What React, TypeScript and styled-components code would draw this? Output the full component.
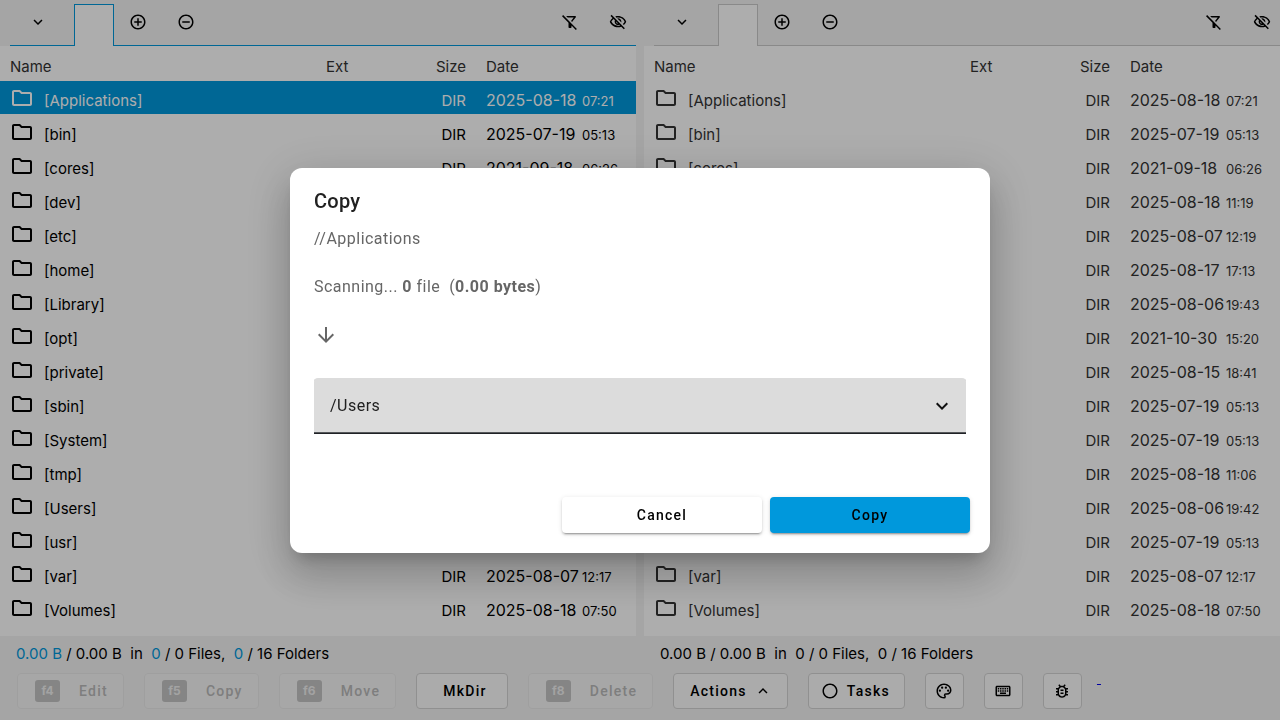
import React from "react";
import styled, { createGlobalStyle, css } from "styled-components";
import {
  MdAddCircleOutline,
  MdArrowDownward,
  MdExpandLess,
  MdExpandMore,
  MdOutlineBugReport,
  MdOutlineFilterAltOff,
  MdOutlineFolder,
  MdOutlineKeyboard,
  MdOutlinePalette,
  MdOutlineVisibilityOff,
  MdRadioButtonUnchecked,
  MdRemoveCircleOutline,
} from "react-icons/md";

const accent = "#0098dc";

const GlobalStyle = createGlobalStyle`
  * { box-sizing: border-box; }
  body {
    margin: 0;
    background: #f4f4f4;
    color: #000;
    font-family: Inter, "Liberation Sans", sans-serif;
    font-size: 15px;
  }
  button, select { font: inherit; color: inherit; }
`;

const Page = styled.div`
  display: flex;
  flex-direction: column;
  min-height: 100vh;
`;

const Panels = styled.main`
  display: flex;
  flex: 1;
  gap: 8px;
`;

const Panel = styled.section`
  display: flex;
  flex-direction: column;
  flex: 1;
  min-width: 0;
`;

const TabBar = styled.header<{ $active: boolean }>`
  --line: ${(p) => (p.$active ? accent : "#cbcbcb")};
  display: flex;
  height: 46px;
  padding: 4px 0 0 10px;
`;

const BarSegment = styled.div<{ $grow?: boolean }>`
  display: flex;
  align-items: center;
  padding-bottom: 5px;
  border-bottom: 1px solid var(--line);
  ${(p) => p.$grow && "flex: 1;"}
`;

const Tab = styled.button`
  width: 40px;
  padding: 0;
  background: #fff;
  border: 1px solid var(--line);
  border-bottom: 0;
`;

const IconButton = styled.button`
  display: flex;
  align-items: center;
  justify-content: center;
  width: 48px;
  height: 36px;
  padding: 0;
  border: 0;
  background: none;
  font-size: 18px;
`;

const MenuButton = styled(IconButton)`
  width: 56px;
  margin-right: 8px;
`;

const Spacer = styled.div`
  flex: 1;
`;

const ToolGroup = styled.div`
  display: flex;
  margin-right: -6px;
`;

const ListArea = styled.div`
  flex: 1;
  padding-bottom: 11px;
  background: #fff;
`;

const FileTable = styled.table<{ $active: boolean }>`
  width: 100%;
  table-layout: fixed;
  border-collapse: collapse;
  line-height: 20px;
  color: ${(p) => (p.$active ? "#000" : "#333")};
`;

const HeadCell = styled.th<{ $width?: number; $right?: boolean }>`
  height: 35px;
  padding: 7px 10px 0;
  color: #333;
  font-weight: 400;
  text-align: ${(p) => (p.$right ? "right" : "left")};
  ${(p) => p.$width && `width: ${p.$width}px;`}
`;

const Row = styled.tr<{ $selected: boolean }>`
  ${(p) =>
    p.$selected &&
    css`
      background: ${accent};
      box-shadow: inset 0 -1px #fff;
      color: #fff;
    `}
`;

const Cell = styled.td<{ $right?: boolean }>`
  height: 34px;
  padding: 6px 10px 0;
  white-space: nowrap;
  text-align: ${(p) => (p.$right ? "right" : "left")};
`;

const FileName = styled.span`
  display: flex;
  align-items: center;
  gap: 10px;

  svg {
    flex: none;
    margin: -2px 0 4px;
    font-size: 24px;
  }
`;

const Stamp = styled.span`
  display: flex;
  align-items: baseline;
  padding-bottom: 2px;
`;

const Day = styled.span`
  width: 96px;
  font-size: 16px;
`;

const Time = styled.span`
  font-size: 13px;
`;

const StatusRow = styled.div`
  display: flex;
  gap: 8px;
  line-height: 36px;
`;

const Status = styled.div`
  flex: 1;
  padding-left: 16px;
  white-space: pre;
`;

const Count = styled.span<{ $active: boolean }>`
  color: ${(p) => (p.$active ? accent : "inherit")};
`;

const ActionBar = styled.footer`
  display: flex;
  gap: 20px;
  padding: 1px 17px 11px;
  font-family: Roboto, sans-serif;
`;

const ActionButton = styled.button`
  display: flex;
  align-items: center;
  justify-content: center;
  height: 36px;
  padding: 0 14px;
  border: 1px solid #d4d4d4;
  border-radius: 4px;
  background: #fdfdfd;
  font-size: 14px;
  font-weight: 500;
  letter-spacing: 0.09em;

  svg { font-size: 18px; }

  &:disabled {
    border-color: #ebebeb;
    background: #f7f7f7;
    color: #bababa;
  }
`;

const KeyActionButton = styled(ActionButton)`
  gap: 19px;
  padding: 0 15px 0 17px;
`;

const PlainActionButton = styled(ActionButton)`
  padding: 0 20px 0 26px;
`;

const MenuActionButton = styled(ActionButton)`
  gap: 7px;
  padding: 0 15px 0 16px;
`;

const TasksButton = styled(ActionButton)`
  gap: 8px;
  padding: 0 14px 0 12px;
`;

const SquareButton = styled(ActionButton)`
  width: 39px;
  padding: 0;
`;

const Key = styled.kbd`
  width: 25px;
  border-radius: 3px;
  background: #c4c4c4;
  color: #f0f0f0;
  font: 700 12px/22px Inter, sans-serif;
  letter-spacing: 0;
`;

const HelpLink = styled.a`
  margin-left: -5px;
  color: #00e;
  font: 16px/10px "Liberation Serif", serif;
  text-decoration: underline;
`;

const Backdrop = styled.div`
  position: fixed;
  inset: 0;
  display: flex;
  align-items: center;
  justify-content: center;
  background: rgba(0, 0, 0, 0.32);
`;

const Dialog = styled.form`
  width: 700px;
  max-width: 90vw;
  border-radius: 12px;
  background: #fff;
  font-family: Roboto, sans-serif;
  font-size: 16px;
  letter-spacing: 0.03em;
  box-shadow:
    0 11px 15px -7px rgba(0, 0, 0, 0.2),
    0 24px 38px 3px rgba(0, 0, 0, 0.14),
    0 9px 46px 8px rgba(0, 0, 0, 0.12);
`;

const DialogTitle = styled.h2`
  margin: 0;
  padding: 17px 24px 10px;
  color: #212121;
  font-size: 20px;
  font-weight: 500;
  line-height: 32px;
  letter-spacing: 0.0125em;
`;

const DialogBody = styled.div`
  padding: 0 24px 63px;
  color: #666;
`;

const Line = styled.p`
  margin: 0 0 24px;
  line-height: 24px;
  white-space: pre;

  svg {
    display: block;
    font-size: 24px;
  }
`;

const Field = styled.label`
  display: grid;
  align-items: center;
  margin-top: 31px;
  color: #111;

  > * { grid-area: 1 / 1; }

  svg {
    justify-self: end;
    margin-right: 12px;
    font-size: 24px;
    pointer-events: none;
  }
`;

const PathSelect = styled.select`
  width: 100%;
  height: 56px;
  padding: 0 48px 0 16px;
  appearance: none;
  border: 0;
  border-bottom: 1px solid #202226;
  border-radius: 4px 4px 0 0;
  background: #dcdcdc;
  box-shadow: inset 0 -1px #55575a;
  color: #212121;
  letter-spacing: inherit;
`;

const DialogActions = styled.div`
  display: flex;
  justify-content: flex-end;
  gap: 8px;
  padding: 0 20px 20px;
`;

const DialogButton = styled.button<{ $primary?: boolean }>`
  width: 200px;
  height: 36px;
  border: 0;
  border-radius: 4px;
  background: ${(p) => (p.$primary ? accent : "#fff")};
  color: #000;
  font-size: 14px;
  font-weight: 500;
  letter-spacing: 0.09em;
  box-shadow:
    0 3px 1px -2px rgba(0, 0, 0, 0.2),
    0 2px 2px rgba(0, 0, 0, 0.14),
    0 1px 5px rgba(0, 0, 0, 0.12);
`;

const files: [string, string, string][] = [
  ["Applications", "2025-08-18", "07:21"],
  ["bin", "2025-07-19", "05:13"],
  ["cores", "2021-09-18", "06:26"],
  ["dev", "2025-08-18", "11:19"],
  ["etc", "2025-08-07", "12:19"],
  ["home", "2025-08-17", "17:13"],
  ["Library", "2025-08-06", "19:43"],
  ["opt", "2021-10-30", "15:20"],
  ["private", "2025-08-15", "18:41"],
  ["sbin", "2025-07-19", "05:13"],
  ["System", "2025-07-19", "05:13"],
  ["tmp", "2025-08-18", "11:06"],
  ["Users", "2025-08-06", "19:42"],
  ["usr", "2025-07-19", "05:13"],
  ["var", "2025-08-07", "12:17"],
  ["Volumes", "2025-08-18", "07:50"],
];

function FilePanel({ active }: { active: boolean }) {
  return (
    <Panel>
      <TabBar $active={active}>
        <BarSegment>
          <MenuButton aria-label="Volumes"><MdExpandMore /></MenuButton>
        </BarSegment>
        <Tab aria-label="Current tab" />
        <BarSegment $grow>
          <IconButton aria-label="Add tab"><MdAddCircleOutline /></IconButton>
          <IconButton aria-label="Remove tab"><MdRemoveCircleOutline /></IconButton>
          <Spacer />
          <ToolGroup>
            <IconButton aria-label="Filter off"><MdOutlineFilterAltOff /></IconButton>
            <IconButton aria-label="Hidden files"><MdOutlineVisibilityOff /></IconButton>
          </ToolGroup>
        </BarSegment>
      </TabBar>
      <ListArea>
        <FileTable $active={active}>
          <thead>
            <tr>
              <HeadCell>Name</HeadCell>
              <HeadCell $width={80}>Ext</HeadCell>
              <HeadCell $width={80} $right>Size</HeadCell>
              <HeadCell $width={160}>Date</HeadCell>
            </tr>
          </thead>
          <tbody>
            {files.map(([name, day, time], i) => (
              <Row key={name} $selected={active && i === 0}>
                <Cell><FileName><MdOutlineFolder />[{name}]</FileName></Cell>
                <Cell />
                <Cell $right>DIR</Cell>
                <Cell><Stamp><Day>{day}</Day><Time>{time}</Time></Stamp></Cell>
              </Row>
            ))}
          </tbody>
        </FileTable>
      </ListArea>
    </Panel>
  );
}

function PanelStatus({ active }: { active: boolean }) {
  return (
    <Status>
      <Count $active={active}>0.00 B</Count>{" / 0.00 B  in  "}
      <Count $active={active}>0</Count>{" / 0 Files,  "}
      <Count $active={active}>0</Count>{" / 16 Folders"}
    </Status>
  );
}

function KeyAction({ shortcut, label }: { shortcut: string; label: string }) {
  return (
    <KeyActionButton disabled>
      <Key>{shortcut}</Key>
      {label}
    </KeyActionButton>
  );
}

export default function App() {
  return (
    <>
      <GlobalStyle />
      <Page>
        <Panels>
          <FilePanel active />
          <FilePanel active={false} />
        </Panels>
        <StatusRow>
          <PanelStatus active />
          <PanelStatus active={false} />
        </StatusRow>
        <ActionBar>
          <KeyAction shortcut="f4" label="Edit" />
          <KeyAction shortcut="f5" label="Copy" />
          <KeyAction shortcut="f6" label="Move" />
          <PlainActionButton>MkDir</PlainActionButton>
          <KeyAction shortcut="f8" label="Delete" />
          <MenuActionButton>Actions<MdExpandLess /></MenuActionButton>
          <TasksButton><MdRadioButtonUnchecked />Tasks</TasksButton>
          <SquareButton aria-label="Theme"><MdOutlinePalette /></SquareButton>
          <SquareButton aria-label="Keyboard shortcuts"><MdOutlineKeyboard /></SquareButton>
          <SquareButton aria-label="Report a bug"><MdOutlineBugReport /></SquareButton>
          <HelpLink href="#" aria-label="Help">{"\u00a0"}</HelpLink>
        </ActionBar>
      </Page>
      <Backdrop>
        <Dialog role="dialog" aria-modal="true" aria-labelledby="dialog-title">
          <DialogTitle id="dialog-title">Copy</DialogTitle>
          <DialogBody>
            <Line>//Applications</Line>
            <Line>Scanning... <b>0</b>{" file  ("}<b>0.00 bytes</b>)</Line>
            <Line><MdArrowDownward /></Line>
            <Field>
              <PathSelect aria-label="Target folder" defaultValue="/Users">
                <option>/Users</option>
              </PathSelect>
              <MdExpandMore />
            </Field>
          </DialogBody>
          <DialogActions>
            <DialogButton type="button">Cancel</DialogButton>
            <DialogButton type="button" $primary>Copy</DialogButton>
          </DialogActions>
        </Dialog>
      </Backdrop>
    </>
  );
}
